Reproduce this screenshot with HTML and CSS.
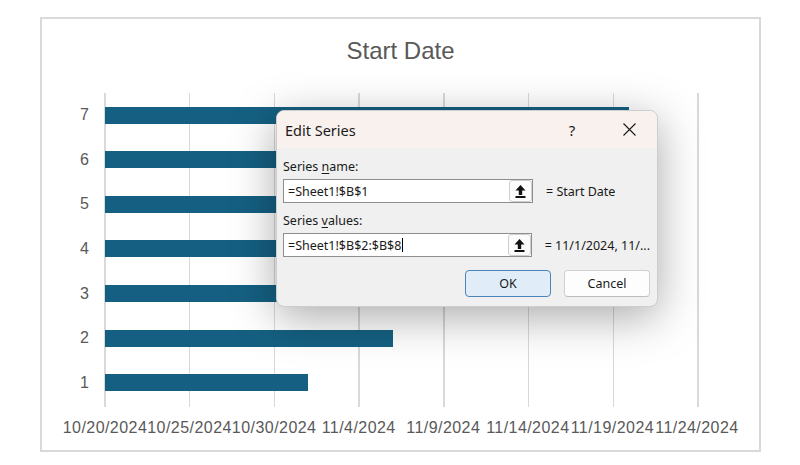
FILE: index.html
```html
<!DOCTYPE html>
<html>
<head>
<meta charset="utf-8">
<link rel="stylesheet" href="styles.css">
</head>
<body>
<div class="frame">
  <div class="title">Start Date</div>
  <div class="chart">
    <div class="yaxis">
      <span>7</span><span>6</span><span>5</span><span>4</span><span>3</span><span>2</span><span>1</span>
    </div>
    <div class="plot">
      <div class="grid"><i></i><i></i><i></i><i></i><i></i><i></i><i></i><i></i></div>
      <div class="bars">
        <div class="row"><div class="bar" style="width:88.57%"></div></div>
        <div class="row"><div class="bar" style="width:74.29%"></div></div>
        <div class="row"><div class="bar" style="width:68.57%"></div></div>
        <div class="row"><div class="bar" style="width:62.86%"></div></div>
        <div class="row"><div class="bar" style="width:54.29%"></div></div>
        <div class="row"><div class="bar" style="width:48.57%"></div></div>
        <div class="row"><div class="bar" style="width:34.29%"></div></div>
      </div>
    </div>
  </div>
  <div class="xaxis">
    <span>10/20/2024</span><span>10/25/2024</span><span>10/30/2024</span><span>11/4/2024</span><span>11/9/2024</span><span>11/14/2024</span><span>11/19/2024</span><span>11/24/2024</span>
  </div>
</div>

<div class="dialog">
  <div class="dtitle">
    <span class="dname">Edit Series</span>
    <span class="help">?</span>
    <span class="close">
      <svg width="13" height="13" viewBox="0 0 13 13"><path d="M0.5 0.5 L12.5 12.5 M12.5 0.5 L0.5 12.5" stroke="#1a1a1a" stroke-width="1.1" fill="none"/></svg>
    </span>
  </div>
  <div class="dbody">
    <div class="label">Series <u>n</u>ame:</div>
    <div class="field">
      <div class="input">
        <span class="val">=Sheet1!$B$1</span>
        <span class="pick">
          <svg width="11" height="13" viewBox="0 0 11 13"><path d="M5.5 0 L10.5 5.5 H7.2 V10 H3.8 V5.5 H0.5 Z" fill="#111"/><rect x="0.5" y="11" width="10" height="2" fill="#111"/></svg>
        </span>
      </div>
      <span class="result">= Start Date</span>
    </div>
    <div class="label second">Series <u>v</u>alues:</div>
    <div class="field">
      <div class="input">
        <span class="val">=Sheet1!$B$2:$B$8<span class="caret"></span></span>
        <span class="pick">
          <svg width="11" height="13" viewBox="0 0 11 13"><path d="M5.5 0 L10.5 5.5 H7.2 V10 H3.8 V5.5 H0.5 Z" fill="#111"/><rect x="0.5" y="11" width="10" height="2" fill="#111"/></svg>
        </span>
      </div>
      <span class="result">= 11/1/2024, 11/...</span>
    </div>
    <div class="buttons">
      <span class="btn ok">OK</span>
      <span class="btn">Cancel</span>
    </div>
  </div>
</div>
</body>
</html>
```

FILE: styles.css
```css
html, body {
  margin: 0;
  padding: 0;
  background: #ffffff;
}

body {
  width: 800px;
  height: 465px;
  overflow: hidden;
  font-family: "Liberation Sans", Arial, sans-serif;
}

.frame {
  margin: 17px 0 0 40px;
  width: 717px;
  height: 431px;
  border: 2px solid #d9d9d9;
  color: #595959;
}

.title {
  padding-top: 18px;
  height: 28px;
  line-height: 28px;
  font-size: 24px;
  text-align: center;
}

.chart {
  margin-top: 28px;
  display: grid;
  grid-template-columns: 63px 592px;
  height: 312px;
}

.yaxis {
  display: grid;
  grid-template-rows: repeat(7, 1fr);
  align-items: center;
  justify-items: end;
  padding-right: 16px;
  font-size: 16px;
  line-height: 18px;
}

.plot {
  position: relative;
}

.grid {
  position: absolute;
  left: -1px;
  right: -2px;
  top: 0;
  bottom: -2px;
  display: flex;
  justify-content: space-between;
}

.grid i {
  display: block;
  width: 1.5px;
  background: #d9d9d9;
}

.bars {
  position: relative;
  height: 100%;
  display: grid;
  grid-template-rows: repeat(7, 1fr);
  align-items: center;
}

.bar {
  height: 17px;
  background: #156082;
}

.xaxis {
  margin-top: 14px;
  margin-left: 20.7px;
  display: flex;
  font-size: 16px;
  line-height: 18px;
  letter-spacing: 0.45px;
}

.xaxis span {
  flex: 0 0 84.57px;
  text-align: center;
  white-space: nowrap;
  display: flex;
  justify-content: center;
}

/* dialog */
.dialog {
  position: absolute;
  left: 276px;
  top: 110px;
  width: 382px;
  box-sizing: border-box;
  border: 1px solid #cdcdcd;
  border-radius: 8px;
  background: #f0f0f0;
  overflow: hidden;
  box-shadow: 0 10px 45px rgba(0, 0, 0, 0.34);
  font-family: "Noto Sans", "Open Sans", sans-serif;
  color: #1a1a1a;
}

.dtitle {
  height: 37px;
  background: #f9f1ee;
  display: flex;
  align-items: center;
  padding-left: 8px;
}

.dname {
  font-size: 14.5px;
}

.help {
  margin-left: auto;
  width: 30px;
  text-align: center;
  font-size: 15px;
}

.close {
  margin-left: 20px;
  margin-right: 6px;
  width: 44px;
  height: 37px;
  display: flex;
  align-items: center;
  justify-content: center;
}

.close svg {
  display: block;
}

.dbody {
  padding: 10px 7px 9px 6px;
  font-size: 12.5px;
}

.label {
  line-height: 17px;
}

.label u {
  text-underline-offset: 2px;
}

.label.second {
  margin-top: 9px;
}

.field {
  margin-top: 4px;
  display: flex;
  align-items: center;
}

.input {
  width: 250px;
  height: 24px;
  box-sizing: border-box;
  border: 1px solid #8e8e8e;
  background: #ffffff;
  display: flex;
  align-items: center;
}

.val {
  padding-left: 4px;
  display: flex;
  align-items: center;
}

.caret {
  display: inline-block;
  width: 1px;
  height: 14px;
  background: #000;
  margin-left: 1px;
}

.pick {
  margin-left: auto;
  width: 23px;
  height: 22px;
  box-sizing: border-box;
  border: 1px solid #cfcfcf;
  border-radius: 3px;
  background: #fbfbfb;
  display: flex;
  align-items: center;
  justify-content: center;
}

.pick svg {
  display: block;
}

.result {
  margin-left: 13px;
  white-space: nowrap;
}

.buttons {
  margin-top: 13px;
  display: flex;
  justify-content: flex-end;
  gap: 13px;
}

.btn {
  width: 86px;
  height: 27px;
  box-sizing: border-box;
  border: 1px solid #d0d0d0;
  border-bottom-color: #bdbdbd;
  border-radius: 4px;
  background: #fdfdfd;
  display: flex;
  align-items: center;
  justify-content: center;
}

.btn.ok {
  background: #e0edf8;
  border: 1px solid #4a84b9;
}
```
